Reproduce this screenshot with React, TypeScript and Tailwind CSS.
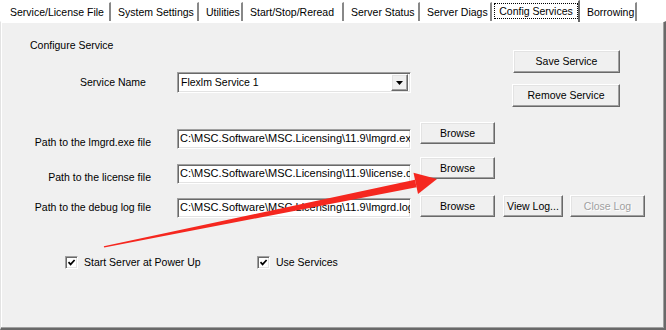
import React from 'react';

const tabs = [
  { label: 'Service/License File', w: 'w-[108px]' },
  { label: 'System Settings', w: 'w-[88px]' },
  { label: 'Utilities', w: 'w-[44px]' },
  { label: 'Start/Stop/Reread', w: 'w-[101px]' },
  { label: 'Server Status', w: 'w-[76px]' },
  { label: 'Server Diags', w: 'w-[72px]' },
  { label: 'Config Services', w: 'w-[88px]', active: true },
  { label: 'Borrowing', w: 'w-[57px]' },
];

const raised =
  'border border-t-white border-l-white border-r-[#696969] border-b-[#696969] shadow-[inset_-1px_-1px_0_#a0a0a0,inset_1px_1px_0_#e3e3e3] bg-[#f0f0f0]';
const sunken =
  'border border-t-[#a0a0a0] border-l-[#a0a0a0] border-r-white border-b-white shadow-[inset_1px_1px_0_#696969,inset_-1px_-1px_0_#e3e3e3] bg-white';

function Button({ label, className = '', disabled = false }: { label: string; className?: string; disabled?: boolean }) {
  return (
    <div
      className={`${raised} ${className} flex items-center justify-center leading-[13px] ${
        disabled ? 'text-[#a0a0a0] [text-shadow:1px_1px_0_#ffffff]' : 'text-black'
      }`}
    >
      {label}
    </div>
  );
}

function PathBox({ value, className = '' }: { value: string; className?: string }) {
  return (
    <div className={`${sunken} ${className} w-[234px] h-[20px] overflow-hidden whitespace-nowrap pl-[2px] text-[11px] leading-[17px]`}>
      {value}
    </div>
  );
}

function Check({ label, className = '' }: { label: string; className?: string }) {
  return (
    <div className={`flex items-center ${className}`}>
      <div className={`${sunken} w-[13px] h-[13px] flex items-center justify-center`}>
        <svg width="9" height="9" viewBox="0 0 9 9">
          <path d="M1.5 4.2 L3.6 6.4 L7.6 2" fill="none" stroke="#000" strokeWidth={1.7} />
        </svg>
      </div>
      <span className="ml-[6px] leading-[13px]">{label}</span>
    </div>
  );
}

export default function App() {
  return (
    <div className="relative w-[666px] h-[330px] overflow-hidden bg-white text-[10.5px] text-black font-['Liberation_Sans',Arial,sans-serif]">
      {/* Tab strip */}
      <div className="flex items-end h-[21px] pl-[3px]">
        {tabs.map(t =>
          t.active ? (
            <div
              key={t.label}
              className={`${t.w} h-[22px] mb-[-1px] relative z-10 bg-white border-t border-l border-t-white border-l-white border-r-2 border-r-[#696969] pl-[1px] pt-[2px]`}
            >
              <div className="w-[84px] h-[16px] border border-dotted border-black flex items-center justify-center leading-[13px]">
                {t.label}
              </div>
            </div>
          ) : (
            <div
              key={t.label}
              className={`${t.w} h-[19px] bg-white border-t border-l border-t-white border-l-white border-r-2 border-r-[#888888] flex items-center pl-[6px] leading-[13px] whitespace-nowrap`}
            >
              {t.label}
            </div>
          )
        )}
      </div>

      {/* Panel */}
      <div className="h-[309px] bg-[#f0f0f0] border border-t-white border-l-[#e3e3e3] border-r-2 border-b-2 border-r-[#696969] border-b-[#696969] shadow-[inset_-1px_-1px_0_#a0a0a0,inset_1px_1px_0_#ffffff]">
        {/* Top section */}
        <div className="flex h-[100px]">
          <div className="w-[420px]">
            <div className="ml-[29px] mt-[17px] leading-[13px]">Configure Service</div>
            <div className="flex items-center mt-[20px]">
              <div className="ml-[79px] w-[97px] leading-[13px]">Service Name</div>
              <div className={`${sunken} w-[234px] h-[21px] flex items-center pl-[3px] pr-[2px]`}>
                <span className="flex-1 leading-[13px]">Flexlm Service 1</span>
                <div className={`${raised} w-[17px] h-[17px] flex items-center justify-center`}>
                  <svg width="7" height="4" viewBox="0 0 7 4">
                    <path d="M0 0 H7 L3.5 4 Z" fill="#000" />
                  </svg>
                </div>
              </div>
            </div>
          </div>
          <div className="ml-[92px] pt-[28px] flex flex-col gap-[11px]">
            <Button label="Save Service" className="w-[107px] h-[23px]" />
            <Button label="Remove Service" className="w-[108px] h-[23px] ml-[-1px]" />
          </div>
        </div>

        {/* Path rows */}
        <div className="flex items-start h-[35px]">
          <div className="w-[150px] text-right mt-[14px] leading-[13px]">Path to the lmgrd.exe file</div>
          <PathBox className="ml-[26px] mt-[7px]" value={'C:\\MSC.Software\\MSC.Licensing\\11.9\\lmgrd.exe'} />
          <Button label="Browse" className="ml-[9px] w-[75px] h-[22px]" />
        </div>
        <div className="flex items-start h-[38px]">
          <div className="w-[150px] text-right mt-[14px] leading-[13px]">Path to the license file</div>
          <PathBox className="ml-[26px] mt-[7px]" value={'C:\\MSC.Software\\MSC.Licensing\\11.9\\license.dat'} />
          <Button label="Browse" className="ml-[9px] w-[75px] h-[22px]" />
        </div>
        <div className="flex items-start h-[22px]">
          <div className="w-[150px] text-right mt-[6px] leading-[13px]">Path to the debug log file</div>
          <PathBox className="ml-[26px] mt-[3px]" value={'C:\\MSC.Software\\MSC.Licensing\\11.9\\lmgrd.log'} />
          <Button label="Browse" className="ml-[9px] w-[75px] h-[22px]" />
          <Button label="View Log..." className="ml-[8px] w-[60px] h-[22px]" />
          <Button label="Close Log" disabled className="ml-[7px] w-[75px] h-[22px]" />
        </div>

        {/* Checkboxes */}
        <div className="flex mt-[39px]">
          <Check label="Start Server at Power Up" className="ml-[64px] w-[192px]" />
          <Check label="Use Services" />
        </div>
      </div>

      {/* Red annotation arrow */}
      <svg className="absolute inset-0 pointer-events-none" width="666" height="330" viewBox="0 0 666 330">
        <polygon points="104.2,247.6 103.8,246.2 415,179.8 416.6,187.2" fill="#f5271f" />
        <polygon points="437,179 413.5,172.8 418,194" fill="#f5271f" />
      </svg>
    </div>
  );
}
